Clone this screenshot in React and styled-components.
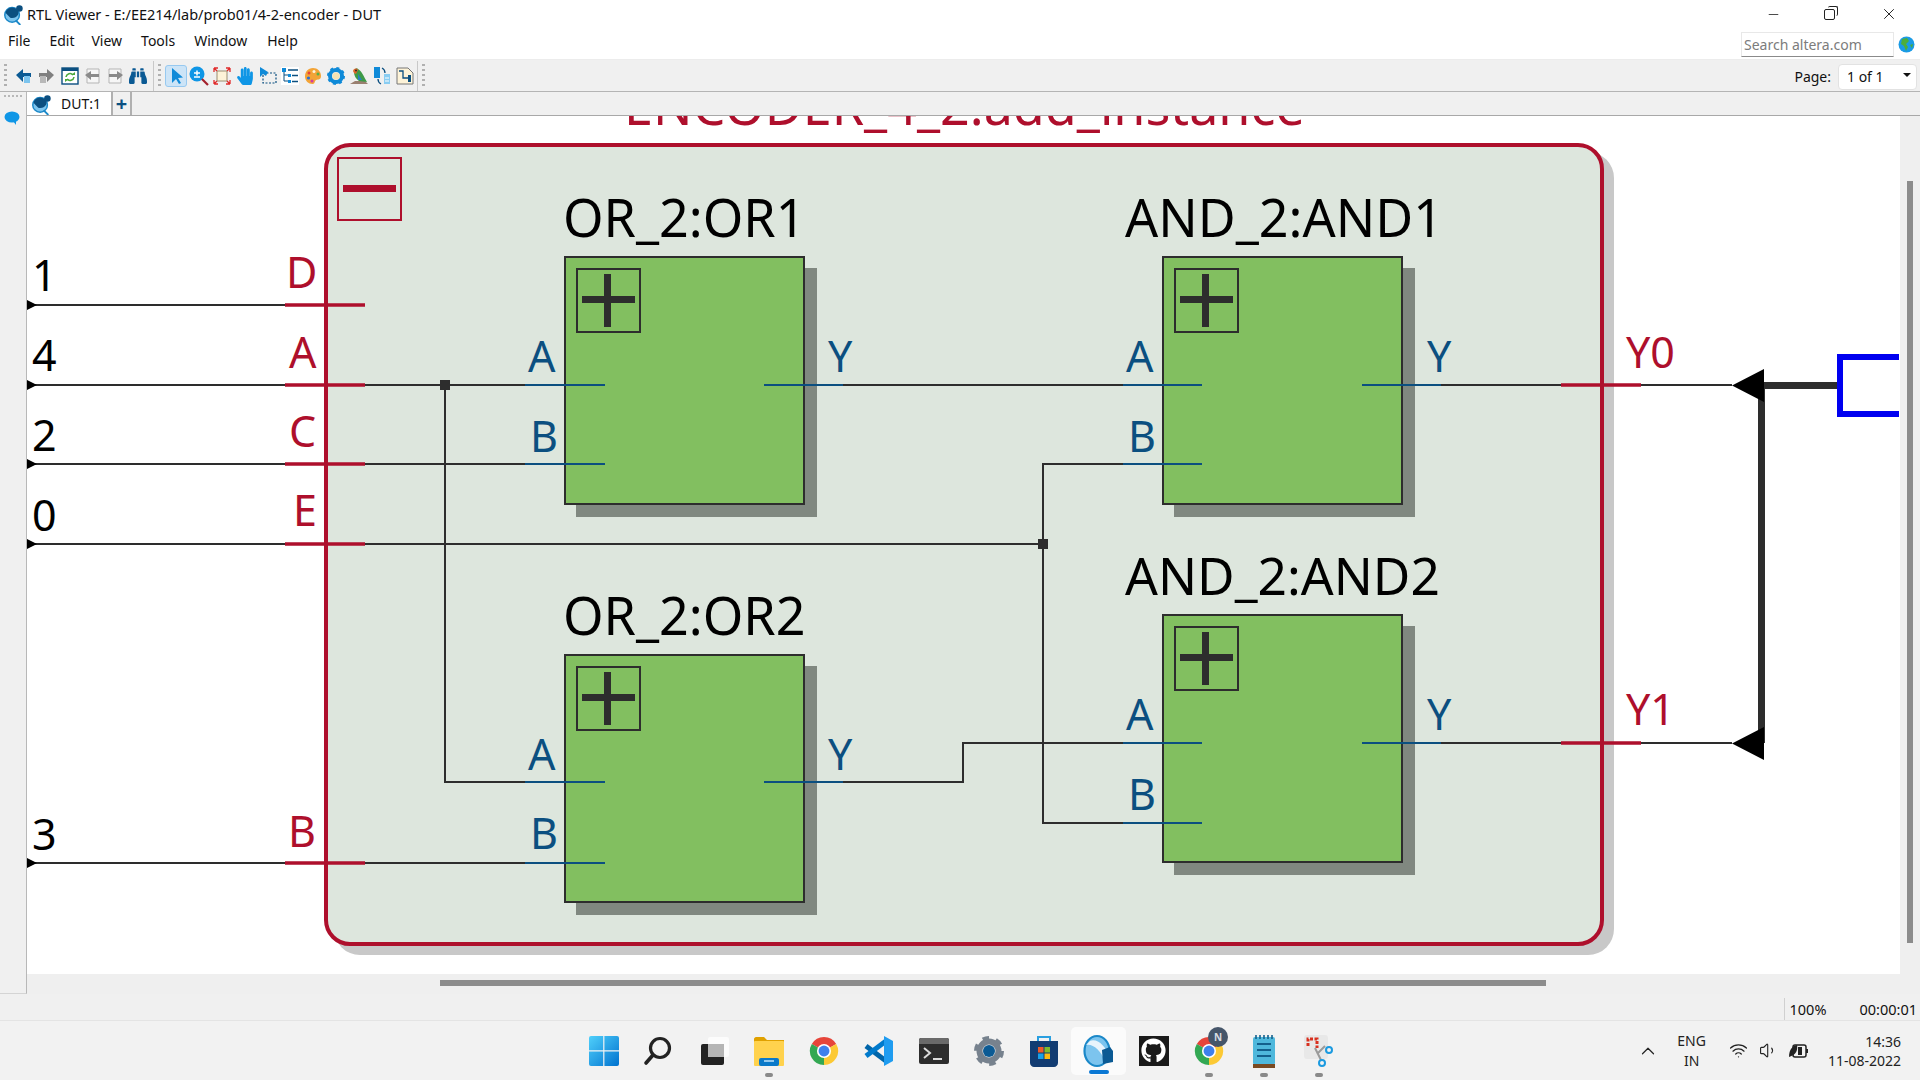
import React from 'react';
import styled, { createGlobalStyle } from 'styled-components';
import { FaGithub, FaHandPaper, FaBinoculars } from 'react-icons/fa';
import { ChevronUp, Wifi, Volume1, X, Minus } from 'lucide-react';

const RED = '#ae0f2c';
const BLUE = '#0b4f80';
const WIRE = '#2d2d2d';

const GlobalStyle = createGlobalStyle`
  html, body { margin: 0; padding: 0; background: #fff; }
  body { font-family: "Noto Sans", "Open Sans", sans-serif; overflow: hidden; }
  * { box-sizing: border-box; }
`;

const Screen = styled.div`
  width: 1920px;
  height: 1080px;
  display: flex;
  flex-direction: column;
  overflow: hidden;
  color: #111;
`;

/* ---------- window title ---------- */
const TitleBar = styled.div`
  height: 28px;
  display: flex;
  align-items: center;
  padding-left: 2px;
  background: #fff;
  font-size: 14.5px;
`;
const TitleText = styled.span`
  margin-left: 3px;
`;
const WindowButtons = styled.div`
  margin-left: auto;
  display: flex;
  align-items: center;
  padding-right: 22px;
  gap: 43px;
  color: #222;
`;
const RestoreIcon = styled.div`
  width: 11px;
  height: 11px;
  margin-right: 2px;
  border: 1.5px solid #222;
  border-radius: 2px;
  position: relative;
  &::after {
    content: '';
    position: absolute;
    top: -4px;
    right: -4px;
    width: 9px;
    height: 9px;
    border-top: 1.5px solid #222;
    border-right: 1.5px solid #222;
    border-radius: 2px;
  }
`;

/* ---------- menu ---------- */
const MenuBar = styled.div`
  height: 32px;
  display: flex;
  align-items: flex-start;
  background: #fff;
  font-size: 14px;
  padding-left: 8px;
  border-bottom: 1px solid #ececec;
`;
const MenuItem = styled.span`
  margin-right: ${(p) => p.$gap}px;
  line-height: 26px;
`;
const SearchBox = styled.div`
  margin-left: auto;
  width: 153px;
  height: 25px;
  margin-top: 4px;
  padding-left: 2px;
  border: 1px solid #e8e8e8;
  border-bottom: 1.5px solid #8a8a8a;
  color: #7c7c7c;
  font-size: 14px;
  line-height: 24px;
`;
const Globe = styled.svg`
  width: 17px;
  height: 17px;
  margin: 8px 5px 0 4px;
`;

/* ---------- toolbar ---------- */
const ToolBar = styled.div`
  height: 32px;
  display: flex;
  align-items: center;
  background: #f0f0f0;
  border-bottom: 1px solid #b4b4b4;
`;
const Grip = styled.div`
  width: 3px;
  height: 24px;
  margin: 0 ${(p) => p.$after}px 0 4px;
  background: repeating-linear-gradient(to bottom, #b0b0b0 0 2px, transparent 2px 5px);
`;
const ToolSep = styled.div`
  width: 1px;
  height: 30px;
  background: #c8c8c8;
  margin: 0 0 0 ${(p) => p.$left || 0}px;
`;
const ToolButton = styled.div`
  width: ${(p) => p.$w || 22}px;
  height: 22px;
  flex: none;
  display: flex;
  align-items: center;
  justify-content: center;
  border-radius: 3px;
  border: 1px solid ${(p) => (p.$active ? '#97c9f0' : 'transparent')};
  background: ${(p) => (p.$active ? '#cce4f7' : 'transparent')};
`;
const PageLabel = styled.span`
  margin-left: auto;
  font-size: 14px;
  margin-right: 7px;
  padding-top: 2px;
`;
const PageCombo = styled.div`
  width: 79px;
  height: 26px;
  margin-right: 3px;
  margin-top: 2px;
  display: flex;
  align-items: center;
  justify-content: space-between;
  padding: 0 5px 0 8px;
  background: #fff;
  border: 1px solid #e2e2e2;
  border-radius: 4px;
  font-size: 14px;
`;
const ComboArrow = styled.div`
  width: 0;
  height: 0;
  margin-bottom: 4px;
  border-left: 4px solid transparent;
  border-right: 4px solid transparent;
  border-top: 4px solid #111;
`;

/* ---------- work area ---------- */
const WorkRow = styled.div`
  height: 902px;
  display: flex;
`;
const LeftStrip = styled.div`
  width: 27px;
  background: #f0f0f0;
  border-right: 1px solid #b8b8b8;
  border-bottom: 1px solid #d4d4d4;
  padding: 3px 0 0 4px;
`;
const StripGrip = styled.div`
  width: 18px;
  height: 2px;
  margin-bottom: 11px;
  background: repeating-linear-gradient(to right, #b8b8b8 0 2px, transparent 2px 4px);
`;
const WorkColumn = styled.div`
  flex: 1;
  display: flex;
  flex-direction: column;
  background: #efefef;
`;
const TabStrip = styled.div`
  height: 24px;
  display: flex;
  background: #f0f0f0;
  border-bottom: 1px solid #a8a8a8;
`;
const Tab = styled.div`
  width: 84px;
  height: 23px;
  display: flex;
  align-items: center;
  background: #fff;
  font-size: 14px;
  padding-left: 3px;
`;
const TabLabel = styled.span`
  margin-left: 9px;
`;
const AddTab = styled.div`
  width: 21px;
  height: 23px;
  display: flex;
  align-items: center;
  justify-content: center;
  border: 1px solid #b0b0b0;
  border-top: 0;
  border-bottom: 0;
  border-left-width: 2px;
  border-right-width: 2px;
  color: ${BLUE};
  font-size: 20px;
  font-weight: 700;
  line-height: 20px;
`;
const CanvasRow = styled.div`
  height: 858px;
  display: flex;
`;
const Canvas = styled.div`
  position: relative;
  width: 1873px;
  height: 858px;
  background: #fff;
  overflow: hidden;
`;
const VScrollTrack = styled.div`
  flex: 1;
  padding: 65px 0 0 7px;
`;
const VScrollThumb = styled.div`
  width: 6px;
  height: 762px;
  background: #8c8c8c;
`;
const HScrollBand = styled.div`
  flex: 1;
  padding: 6px 0 0 413px;
`;
const HScrollThumb = styled.div`
  width: 1106px;
  height: 6px;
  background: #8c8c8c;
`;

/* ---------- schematic: everything here sits at its place on the free canvas ---------- */
const at = (v, o) => v - o;

const Region = styled.div`
  position: absolute;
  left: ${at(324, 27)}px;
  top: ${at(143, 116)}px;
  width: 1280px;
  height: 803px;
  background: #dde6dd;
  border: 4px solid ${RED};
  border-radius: 26px;
  box-shadow: 10px 9px 0 #c8c8c8;
`;
const MinusBox = styled.div`
  position: absolute;
  left: ${at(337, 27)}px;
  top: ${at(157, 116)}px;
  width: 65px;
  height: 64px;
  border: 2px solid ${RED};
  &::after {
    content: '';
    position: absolute;
    left: 4px;
    right: 4px;
    top: 26px;
    height: 7px;
    background: ${RED};
  }
`;
const Gate = styled.div`
  position: absolute;
  left: ${(p) => at(p.$x, 27)}px;
  top: ${(p) => at(p.$y, 116)}px;
  width: 241px;
  height: 249px;
  padding: 10px 0 0 10px;
  background: #82bf60;
  border: 2px solid ${WIRE};
  box-shadow: 12px 12px 0 #808880;
`;
const PlusBox = styled.div`
  position: relative;
  width: 65px;
  height: 65px;
  border: 2px solid ${WIRE};
  &::before {
    content: '';
    position: absolute;
    left: 4px;
    right: 4px;
    top: 26px;
    height: 7px;
    background: ${WIRE};
  }
  &::after {
    content: '';
    position: absolute;
    top: 4px;
    bottom: 4px;
    left: 26px;
    width: 7px;
    background: ${WIRE};
  }
`;
const Label = styled.div`
  position: absolute;
  left: ${(p) => at(p.$x, 27)}px;
  top: ${(p) => at(p.$base, 116) - 37.2}px;
  font-size: 43px;
  line-height: 43px;
  white-space: nowrap;
  color: ${(p) => p.$color};
`;
const Heading = styled.div`
  position: absolute;
  left: ${(p) => at(p.$x, 27)}px;
  top: ${(p) => at(p.$base, 116) - 46.2}px;
  font-size: ${(p) => p.$size || 52}px;
  line-height: 52px;
  white-space: nowrap;
  color: ${(p) => p.$color};
`;
const WireLayer = styled.svg`
  position: absolute;
  left: 0;
  top: 0;
  width: 1873px;
  height: 858px;
`;

const gates = [
  { x: 564, y: 256, title: 'OR_2:OR1', tx: 563, base: 237 },
  { x: 1162, y: 256, title: 'AND_2:AND1', tx: 1125, base: 237 },
  { x: 564, y: 654, title: 'OR_2:OR2', tx: 563, base: 635 },
  { x: 1162, y: 614, title: 'AND_2:AND2', tx: 1125, base: 595, size: 51.5 },
];

const blackLabels = [
  ['1', 32, 290],
  ['4', 32, 370],
  ['2', 32, 450],
  ['0', 32, 530],
  ['3', 32, 849],
];
const redLabels = [
  ['D', 286, 287],
  ['A', 289, 367],
  ['C', 289, 446],
  ['E', 293, 525],
  ['B', 288, 846],
  ['Y0', 1626, 367],
  ['Y1', 1626, 724],
];
const blueLabels = [
  ['A', 528, 371], ['B', 530, 451], ['Y', 828, 371],
  ['A', 1126, 371], ['B', 1128, 451], ['Y', 1427, 371],
  ['A', 528, 769], ['B', 530, 848], ['Y', 828, 769],
  ['A', 1126, 729], ['B', 1128, 809], ['Y', 1427, 729],
];

const inputs = [305, 385, 464, 544, 863];
const blackWires = [
  ...inputs.map((y) => `M27 ${y}H285`),
  'M365 385H525', 'M365 464H525', 'M365 863H525', 'M365 544H1043',
  'M445 385V782H525',
  'M843 385H1123',
  'M1123 464H1043V823H1123',
  'M843 782H963V743H1123',
  'M1441 385H1732', 'M1441 743H1732',
];
const blueTicks = [
  'M525 385H605', 'M525 464H605', 'M764 385H843',
  'M1123 385H1202', 'M1123 464H1202', 'M1362 385H1441',
  'M525 782H605', 'M525 863H605', 'M764 782H843',
  'M1123 743H1202', 'M1123 823H1202', 'M1362 743H1441',
];
const redTicks = [
  ...inputs.map((y) => `M285 ${y}H365`),
  'M1561 385H1641', 'M1561 743H1641',
];

const Schematic = () => (
  <Canvas>
    <Heading $x={624} $base={125} $color={RED}>ENCODER_4_2:add_instance</Heading>
    <Region />
    <MinusBox />
    {gates.map((g) => (
      <React.Fragment key={g.title}>
        <Gate $x={g.x} $y={g.y}><PlusBox /></Gate>
        <Heading $x={g.tx} $base={g.base} $size={g.size} $color="#000">{g.title}</Heading>
      </React.Fragment>
    ))}
    {blackLabels.map(([t, x, b]) => <Label key={t} $x={x} $base={b} $color="#000">{t}</Label>)}
    {redLabels.map(([t, x, b]) => <Label key={t} $x={x} $base={b} $color={RED}>{t}</Label>)}
    {blueLabels.map(([t, x, b]) => <Label key={`${t}${x}${b}`} $x={x} $base={b} $color={BLUE}>{t}</Label>)}
    <WireLayer viewBox="27 116 1873 858">
      {blackWires.map((d) => <path key={d} d={d} stroke={WIRE} strokeWidth="2" fill="none" />)}
      {blueTicks.map((d) => <path key={d} d={d} stroke={BLUE} strokeWidth="2" fill="none" />)}
      {redTicks.map((d) => <path key={d} d={d} stroke={RED} strokeWidth="3.5" fill="none" />)}
      {inputs.map((y) => <path key={y} d={`M27 ${y - 5}L37 ${y}L27 ${y + 5}Z`} fill="#000" />)}
      <rect x="440" y="380" width="10" height="10" fill={WIRE} />
      <rect x="1038" y="539" width="10" height="10" fill={WIRE} />
      <path d="M1761.5 385V743" stroke={WIRE} strokeWidth="7" />
      <path d="M1764 385.5H1840" stroke={WIRE} strokeWidth="7" />
      <path d="M1732 385.5L1764 369V402Z" fill="#000" />
      <path d="M1732 743.5L1764 727V760Z" fill="#000" />
      <path d="M1899 357H1840V414H1899" fill="none" stroke="#0000f0" strokeWidth="6" />
    </WireLayer>
  </Canvas>
);

/* ---------- small drawings ---------- */
const RtlLogo = ({ size = 22 }) => (
  <svg width={size} height={size} viewBox="0 0 22 24">
    <circle cx="10" cy="13" r="8" fill="#7cc4ee" stroke="#1b88c8" strokeWidth="1.6" />
    <path d="M3 11a7 6 0 0 1 14 0a7 5 0 0 1-9 5z" fill="#0b4f80" />
    <circle cx="18" cy="6" r="3.6" fill="#0b4f80" />
    <path d="M14 19l5 5" stroke="#1b88c8" strokeWidth="2" />
  </svg>
);
const BackIcon = () => (
  <svg width="18" height="18" viewBox="0 0 18 18">
    <path d="M1 8L8 2V6H16V10H8V15Z" fill="#0b5a94" />
    <rect x="9" y="9" width="6" height="7" fill="#7cc4ee" />
  </svg>
);
const ForwardIcon = () => (
  <svg width="18" height="18" viewBox="0 0 18 18">
    <path d="M17 8L10 2V6H2V10H10V15Z" fill="#7f7f7f" />
    <rect x="3" y="9" width="6" height="7" fill="#b8b8b8" />
  </svg>
);
const RefreshIcon = () => (
  <svg width="18" height="18" viewBox="0 0 18 18">
    <rect x="1" y="1" width="16" height="16" fill="#fff" stroke="#0b4f80" strokeWidth="1.4" />
    <rect x="1" y="1" width="16" height="3" fill="#0b4f80" />
    <path d="M5 10a4 4 0 0 1 7-2M13 10a4 4 0 0 1-7 2" fill="none" stroke="#4ba83c" strokeWidth="1.6" />
    <path d="M10 8h4V5zM8 12H4v3z" fill="#4ba83c" />
  </svg>
);
const PageArrow = ({ flip }) => (
  <svg width="18" height="18" viewBox="0 0 18 18" style={flip ? { transform: 'scaleX(-1)' } : undefined}>
    <path d="M3 2H15V16H3Z" fill="#f6f6f6" stroke="#b5b5b5" />
    <path d="M1 8L7 4V7H15V10H7V13Z" fill="#8a8a8a" />
  </svg>
);
const SelectIcon = () => (
  <svg width="18" height="18" viewBox="0 0 18 18">
    <path d="M5 1V16L9 12L12 17L14 16L11 11L16 10.5Z" fill="#0f8ad8" />
  </svg>
);
const ZoomIcon = () => (
  <svg width="20" height="20" viewBox="0 0 20 20">
    <circle cx="8" cy="8" r="7.5" fill="#0f96e6" />
    <path d="M5 7H11M8 4.5V9.5M5 11H11" stroke="#fff" strokeWidth="1.5" />
    <path d="M13 13L19 19" stroke="#a3202c" strokeWidth="2.2" />
  </svg>
);
const FitIcon = () => (
  <svg width="18" height="18" viewBox="0 0 18 18">
    <rect x="4" y="4" width="10" height="10" fill="#fdf3d8" stroke="#9a8c70" />
    <path d="M1 1L4 4M17 1L14 4M1 17L4 14M17 17L14 14M1 1H5M1 1V5M17 1H13M17 1V5M1 17H5M1 17V13M17 17H13M17 17V13" stroke="#e02a2a" strokeWidth="1.3" fill="none" />
  </svg>
);
const BoxSelectIcon = () => (
  <svg width="18" height="18" viewBox="0 0 18 18">
    <rect x="4" y="6" width="13" height="10" fill="none" stroke="#0b4f80" strokeWidth="1.2" strokeDasharray="2 1.5" />
    <path d="M1 0V10L4 7L7 9L9 5Z" fill="#0f8ad8" />
  </svg>
);
const TreeIcon = () => (
  <svg width="18" height="18" viewBox="0 0 18 18">
    <rect width="18" height="18" fill="#fff" />
    <path d="M3 3V14H8M3 8H8" stroke="#0b4f80" fill="none" />
    <rect x="1" y="1" width="4" height="4" fill="#0f8ad8" />
    <rect x="7" y="7" width="3" height="3" fill="#0f8ad8" />
    <rect x="7" y="13" width="3" height="3" fill="#0f8ad8" />
    <path d="M7 3H17M11 8.5H17M11 14.5H17" stroke="#0b4f80" strokeWidth="1.5" />
  </svg>
);
const PaletteIcon = () => (
  <svg width="18" height="18" viewBox="0 0 18 18">
    <path d="M9 1C4 1 1 5 1 9.5C1 14 4.5 17 8.5 17C11 17 10.5 14.5 11.5 13.5C13 12 17 13.5 17 9C17 4.5 13.5 1 9 1Z" fill="#f3a437" />
    <circle cx="5" cy="6" r="1.5" fill="#e8433a" />
    <circle cx="4.5" cy="11" r="1.6" fill="#2a6fd6" />
    <circle cx="8" cy="14" r="1.5" fill="#d23ca0" />
    <circle cx="10" cy="4.5" r="1.5" fill="#fdf3d8" />
    <circle cx="14" cy="7" r="1.5" fill="#57b04a" />
  </svg>
);
const GearRing = () => (
  <svg width="18" height="18" viewBox="0 0 18 18">
    <circle cx="9" cy="9" r="6" fill="none" stroke="#0f8ad8" strokeWidth="4" />
    <circle cx="9" cy="9" r="8" fill="none" stroke="#0f8ad8" strokeWidth="2" strokeDasharray="3 3.3" />
    <circle cx="9" cy="9" r="3.6" fill="#f5e3b4" />
  </svg>
);
const ParrotIcon = () => (
  <svg width="18" height="18" viewBox="0 0 18 18">
    <path d="M0 17L5 14H15L18 17Z" fill="#9a8070" />
    <path d="M4 5C4 2 7 0 8 2C12 4 14 10 17 15L9 14C6 12 4 9 4 5Z" fill="#3d9a48" />
    <path d="M3 4C4 1 7 1 8 3L6 7L4 6Z" fill="#e0672a" />
    <circle cx="6" cy="3.5" r="0.9" fill="#222" />
    <path d="M8 7L12 13L8 13Z" fill="#2b7fc0" />
  </svg>
);
const SwapIcon = () => (
  <svg width="18" height="18" viewBox="0 0 18 18">
    <rect x="1" y="0" width="6" height="11" fill="#0f8ad8" />
    <rect x="11" y="7" width="6" height="10" fill="#89cdf2" />
    <path d="M9 1C11 2 12 3 12 6M8 17C6 16 5 15 5 12" stroke="#0b4f80" strokeWidth="1.3" fill="none" />
    <path d="M12 11H16M12 14H16" stroke="#fff" />
  </svg>
);
const NetIcon = () => (
  <svg width="18" height="18" viewBox="0 0 18 18">
    <path d="M1 1H12L17 6V17H1Z" fill="#fdf3d8" stroke="#777" />
    <path d="M3 4H7V11H14" stroke="#0b4f80" strokeWidth="1.3" fill="none" />
    <rect x="12" y="8" width="3" height="7" fill="#0b4f80" />
  </svg>
);
const ChatIcon = () => (
  <svg width="16" height="14" viewBox="0 0 16 14">
    <ellipse cx="8" cy="6" rx="7.5" ry="5.5" fill="#0f96e6" />
    <path d="M9 10L12 14L12 9Z" fill="#0f96e6" />
  </svg>
);

/* taskbar icons */
const WinIcon = () => (
  <svg width="30" height="30" viewBox="0 0 30 30">
    <defs>
      <linearGradient id="winG" x1="0" y1="0" x2="1" y2="1">
        <stop offset="0" stopColor="#50d0fb" />
        <stop offset="1" stopColor="#0072cf" />
      </linearGradient>
    </defs>
    <rect width="30" height="30" rx="2" fill="url(#winG)" />
    <path d="M14.8 0V30M0 14.8H30" stroke="#f3f3f3" strokeWidth="1.2" />
  </svg>
);
const SearchIcon = () => (
  <svg width="30" height="30" viewBox="0 0 30 30" style={{ marginLeft: -4 }}>
    <circle cx="18" cy="12" r="9.5" fill="none" stroke="#222" strokeWidth="3.2" />
    <path d="M11 19L4 27" stroke="#222" strokeWidth="3.6" strokeLinecap="round" />
  </svg>
);
const TaskViewIcon = () => (
  <svg width="30" height="30" viewBox="0 0 30 30" style={{ marginLeft: 2 }}>
    <rect x="1" y="8" width="23" height="21" rx="2" fill="#222" />
    <rect x="8" y="1" width="21" height="20" rx="2" fill="#fff" fillOpacity="0.75" />
    <rect x="8" y="8" width="16" height="13" fill="#b5b5b5" />
  </svg>
);
const FolderIcon = () => (
  <svg width="32" height="30" viewBox="0 0 32 30">
    <path d="M1 3C1 2 2 1 3 1H11L14 4H31V10H1Z" fill="#e0a100" />
    <rect x="1" y="5" width="30" height="25" rx="1" fill="#ffd24d" />
    <rect x="6" y="22" width="20" height="8" rx="2" fill="#0a79c9" />
    <path d="M11 25H21" stroke="#bfe3fa" strokeWidth="1.5" />
  </svg>
);
const ChromeIcon = () => (
  <svg width="30" height="30" viewBox="0 0 32 32">
    <path d="M16 16L3 8.5A15 15 0 0 1 29 8.5Z" fill="#e6453a" />
    <path d="M16 16L29 8.5A15 15 0 0 1 16 31Z" fill="#fcc934" />
    <path d="M16 16L16 31A15 15 0 0 1 3 8.5Z" fill="#33a853" />
    <circle cx="16" cy="16" r="7.5" fill="#fff" />
    <circle cx="16" cy="16" r="5.8" fill="#3e80ec" />
  </svg>
);
const VsCodeIcon = () => (
  <svg width="32" height="32" viewBox="0 0 32 32">
    <path d="M3 11L23 26" stroke="#0065a9" strokeWidth="5" />
    <path d="M3 21L23 6" stroke="#007acc" strokeWidth="5" />
    <path d="M21 1L30 6V26L21 31Z" fill="#1f9cf0" />
  </svg>
);
const TerminalIcon = () => (
  <svg width="30" height="26" viewBox="0 0 30 26">
    <rect width="30" height="26" rx="2" fill="#2d2d2d" />
    <path d="M0 2C0 1 1 0 2 0H28C29 0 30 1 30 2V6H0Z" fill="#6a6a6a" />
    <path d="M5 10L11 15L5 20" stroke="#dcdcdc" strokeWidth="2" fill="none" />
    <path d="M14 21H23" stroke="#dcdcdc" strokeWidth="2" />
  </svg>
);
const SettingsIcon = () => (
  <svg width="30" height="30" viewBox="0 0 30 30">
    <circle cx="15" cy="15" r="9.5" fill="none" stroke="#77828e" strokeWidth="6" />
    <circle cx="15" cy="15" r="13" fill="none" stroke="#77828e" strokeWidth="4" strokeDasharray="6.5 7.1" />
    <circle cx="15" cy="15" r="6" fill="#0b5a94" />
  </svg>
);
const StoreIcon = () => (
  <svg width="30" height="32" viewBox="0 0 30 32">
    <path d="M9 6V2H21V6" stroke="#2a9fe0" strokeWidth="2" fill="none" />
    <path d="M1 6H29V28C29 30 27 32 25 32H5C3 32 1 30 1 28Z" fill="#123c72" />
    <rect x="9" y="12" width="5.5" height="5.5" fill="#f05a28" />
    <rect x="15.5" y="12" width="5.5" height="5.5" fill="#7dba2c" />
    <rect x="9" y="18.5" width="5.5" height="5.5" fill="#18a0e8" />
    <rect x="15.5" y="18.5" width="5.5" height="5.5" fill="#fcb912" />
  </svg>
);
const QuartusIcon = () => (
  <svg width="32" height="34" viewBox="0 0 32 34">
    <ellipse cx="14" cy="17" rx="12.5" ry="15" fill="#7cc4ee" stroke="#1b88c8" strokeWidth="2.2" />
    <path d="M3 11C9 9 18 16 22 27L27 24C23 12 14 4 7 7Z" fill="#e8f4fc" />
    <path d="M19 16L27 13L30 17V28L20 30Z" fill="#0b5a94" />
  </svg>
);
const GithubTile = styled.div`
  width: 30px;
  height: 30px;
  display: flex;
  align-items: center;
  justify-content: center;
  background: #1a1a1a;
  color: #fff;
  font-size: 25px;
`;
const NotepadIcon = () => (
  <svg width="24" height="34" viewBox="0 0 24 34">
    <rect x="1" y="3" width="22" height="28" rx="2" fill="#4fb8dc" />
    <rect x="1" y="30" width="22" height="4" fill="#7a4a22" />
    <path d="M4 1V5M8 1V5M12 1V5M16 1V5M20 1V5" stroke="#14608c" strokeWidth="1.6" />
    <path d="M5 10H19M5 16H19M5 22H19" stroke="#14608c" strokeWidth="2" />
  </svg>
);
const SnipIcon = () => (
  <svg width="32" height="34" viewBox="0 0 32 34">
    <rect x="1" y="1" width="24" height="24" rx="3" fill="#e8e8e8" />
    <path d="M5 12V5H14V14" stroke="#d8301f" strokeWidth="3" strokeDasharray="3 1.5" fill="none" />
    <path d="M12 14L18 26M22 12L14 20" stroke="#9a9a9a" strokeWidth="2" />
    <circle cx="26" cy="16" r="3" fill="none" stroke="#1b9ae0" strokeWidth="2" />
    <circle cx="19" cy="29" r="3" fill="none" stroke="#1b9ae0" strokeWidth="2" />
  </svg>
);

/* ---------- status + taskbar ---------- */
const StatusBar = styled.div`
  height: 26px;
  display: flex;
  align-items: center;
  justify-content: flex-end;
  background: #f0f0f0;
  font-size: 14.5px;
  padding: 3px 3px 0 0;
`;
const StatusCell = styled.span`
  margin-right: ${(p) => p.$gap}px;
  padding-left: ${(p) => p.$pad || 0}px;
  border-left: ${(p) => (p.$divided ? '1px solid #d0d0d0' : 'none')};
  line-height: 22px;
`;
const TaskBar = styled.div`
  height: 60px;
  display: flex;
  align-items: center;
  background: #f2f2f2;
  border-top: 1px solid #e4e4e4;
`;
const TaskIcons = styled.div`
  display: flex;
  margin-left: 576px;
`;
const TaskSlot = styled.div`
  position: relative;
  width: 55px;
  height: 48px;
  display: flex;
  align-items: center;
  justify-content: center;
  border-radius: 5px;
  background: ${(p) => (p.$active ? '#fbfbfb' : 'transparent')};
`;
const RunDot = styled.div`
  position: absolute;
  bottom: -2px;
  left: 50%;
  transform: translateX(-50%);
  width: 8px;
  height: 4px;
  border-radius: 2px;
  background: #8a8a8a;
`;
const ActivePill = styled.div`
  position: absolute;
  bottom: 1px;
  left: 50%;
  transform: translateX(-50%);
  width: 20px;
  height: 4px;
  border-radius: 2px;
  background: #0a78d4;
`;
const NBadge = styled.div`
  position: absolute;
  top: 0;
  right: 8px;
  width: 20px;
  height: 20px;
  border-radius: 50%;
  background: #46566a;
  color: #d8dde3;
  font-size: 10px;
  font-weight: 700;
  display: flex;
  align-items: center;
  justify-content: center;
`;
const Tray = styled.div`
  margin-left: auto;
  display: flex;
  align-items: center;
  padding-right: 19px;
  color: #222;
  font-size: 14px;
`;
const LangBlock = styled.div`
  display: flex;
  flex-direction: column;
  align-items: center;
  line-height: 20px;
  margin: 0 23px 0 18px;
`;
const TrayIcons = styled.div`
  display: flex;
  align-items: center;
  gap: 11px;
  margin-right: 19px;
`;
const ClockBlock = styled.div`
  display: flex;
  flex-direction: column;
  align-items: flex-end;
  line-height: 19px;
`;
const BatteryIcon = () => (
  <svg width="20" height="14" viewBox="0 0 20 14">
    <rect x="4" y="1" width="13" height="12" rx="2" fill="none" stroke="#222" strokeWidth="1.5" />
    <rect x="17" y="5" width="2" height="4" fill="#222" />
    <rect x="9" y="3" width="4" height="8" fill="#222" />
    <path d="M0 13C0 6 3 2 8 1C9 6 7 11 0 13Z" fill="#222" />
  </svg>
);

const menu = [['File', 19], ['Edit', 17], ['View', 19], ['Tools', 19], ['Window', 20], ['Help', 0]];

const tools = [
  [<SelectIcon />, true],
  [<ZoomIcon />],
  [<FitIcon />],
  [<FaHandPaper color="#0f96e6" size={18} />],
  [<BoxSelectIcon />],
  [<TreeIcon />],
  [<PaletteIcon />],
  [<GearRing />],
  [<ParrotIcon />],
  [<SwapIcon />],
  [<NetIcon />],
];

const taskItems = [
  { icon: <WinIcon /> },
  { icon: <SearchIcon /> },
  { icon: <TaskViewIcon /> },
  { icon: <FolderIcon />, run: true },
  { icon: <ChromeIcon /> },
  { icon: <VsCodeIcon /> },
  { icon: <TerminalIcon /> },
  { icon: <SettingsIcon /> },
  { icon: <StoreIcon /> },
  { icon: <QuartusIcon />, active: true },
  { icon: <GithubTile><FaGithub /></GithubTile> },
  { icon: <ChromeIcon />, run: true, badge: true },
  { icon: <NotepadIcon />, run: true },
  { icon: <SnipIcon />, run: true },
];

const App = () => {
  return (
    <Screen>
      <GlobalStyle />
      <TitleBar>
        <RtlLogo />
        <TitleText>RTL Viewer - E:/EE214/lab/prob01/4-2-encoder - DUT</TitleText>
        <WindowButtons>
          <Minus size={15} strokeWidth={1.3} />
          <RestoreIcon />
          <X size={18} strokeWidth={1.3} />
        </WindowButtons>
      </TitleBar>

      <MenuBar>
        {menu.map(([m, gap]) => <MenuItem key={m} $gap={gap}>{m}</MenuItem>)}
        <SearchBox>Search altera.com</SearchBox>
        <Globe viewBox="0 0 17 17">
          <circle cx="8.5" cy="8.5" r="8" fill="#1a9be6" />
          <path d="M4 3L9 2L11 5L8 8L10 11L8 15L6 10L3 8Z" fill="#4cae3c" />
          <path d="M12 9L15 8L14 12Z" fill="#4cae3c" />
        </Globe>
      </MenuBar>

      <ToolBar>
        <Grip $after={6} />
        <ToolButton><BackIcon /></ToolButton>
        <ToolButton><ForwardIcon /></ToolButton>
        <ToolButton $w={25}><RefreshIcon /></ToolButton>
        <ToolButton><PageArrow /></ToolButton>
        <ToolButton><PageArrow flip /></ToolButton>
        <ToolButton $w={24}><FaBinoculars color="#0b5a94" size={18} /></ToolButton>
        <ToolSep $left={3} />
        <Grip $after={3.5} />
        {tools.map(([icon, active], i) => (
          <ToolButton key={i} $active={active} $w={22.9}>{icon}</ToolButton>
        ))}
        <ToolSep $left={1} />
        <Grip $after={0} />
        <PageLabel>Page:</PageLabel>
        <PageCombo>
          1 of 1
          <ComboArrow />
        </PageCombo>
      </ToolBar>

      <WorkRow>
        <LeftStrip>
          <StripGrip />
          <ChatIcon />
        </LeftStrip>
        <WorkColumn>
          <TabStrip>
            <Tab>
              <RtlLogo size={22} />
              <TabLabel>DUT:1</TabLabel>
            </Tab>
            <AddTab>+</AddTab>
          </TabStrip>
          <CanvasRow>
            <Schematic />
            <VScrollTrack><VScrollThumb /></VScrollTrack>
          </CanvasRow>
          <HScrollBand><HScrollThumb /></HScrollBand>
        </WorkColumn>
      </WorkRow>

      <StatusBar>
        <StatusCell $divided $pad={5} $gap={33}>100%</StatusCell>
        <StatusCell $gap={0}>00:00:01</StatusCell>
      </StatusBar>

      <TaskBar>
        <TaskIcons>
          {taskItems.map((t, i) => (
            <TaskSlot key={i} $active={t.active}>
              {t.icon}
              {t.run && <RunDot />}
              {t.active && <ActivePill />}
              {t.badge && <NBadge>N</NBadge>}
            </TaskSlot>
          ))}
        </TaskIcons>
        <Tray>
          <ChevronUp size={22} strokeWidth={1.3} />
          <LangBlock><span>ENG</span><span>IN</span></LangBlock>
          <TrayIcons>
            <Wifi size={19} strokeWidth={1.6} />
            <Volume1 size={19} strokeWidth={1.4} />
            <BatteryIcon />
          </TrayIcons>
          <ClockBlock><span>14:36</span><span>11-08-2022</span></ClockBlock>
        </Tray>
      </TaskBar>
    </Screen>
  );
};

export default App;
